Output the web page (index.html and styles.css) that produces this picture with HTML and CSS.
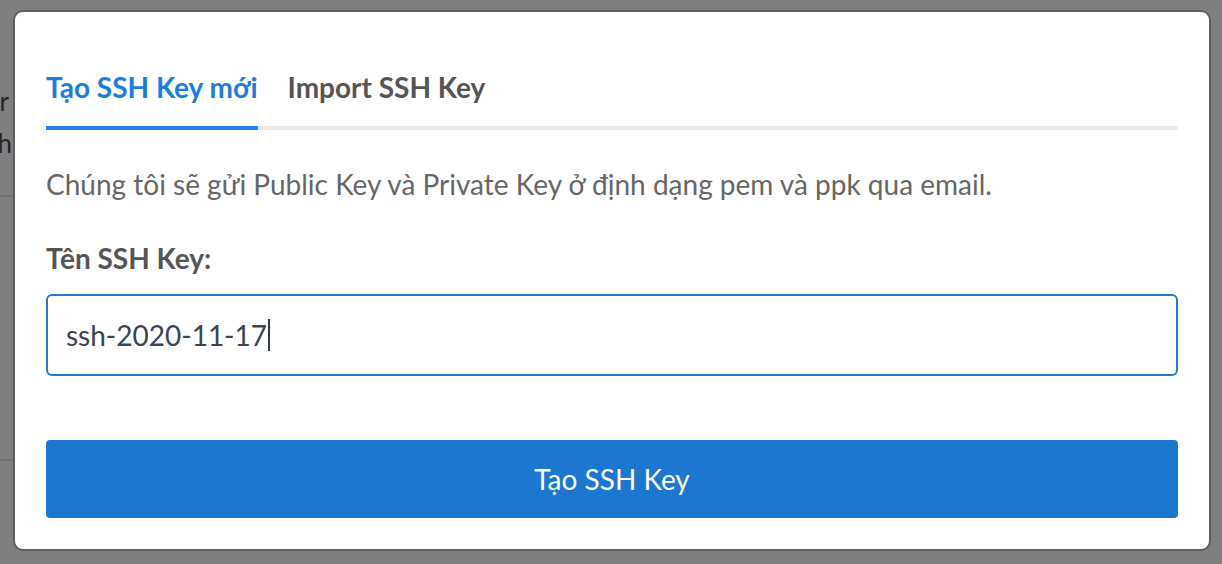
FILE: index.html
```html
<!DOCTYPE html>
<html lang="vi">
<head>
<meta charset="utf-8">
<title>SSH Key</title>
<link rel="stylesheet" href="styles.css">
</head>
<body>
<div class="page">
  <div class="bg-col">
    <span class="bg-text bg-r">Server</span>
    <span class="bg-text bg-h">Thanh</span>
    <div class="bg-line bg-line1"></div>
    <div class="bg-line bg-line2"></div>
  </div>
</div>
<div class="overlay">
  <div class="modal">
    <div class="tabs">
      <div class="tab active">Tạo SSH Key mới</div>
      <div class="tab">Import SSH Key</div>
    </div>
    <p class="desc">Chúng tôi sẽ gửi Public Key và Private Key ở định dạng pem và ppk qua email.</p>
    <label class="label" for="keyname">Tên SSH Key:</label>
    <div class="input"><span class="input-text">ssh-2020-11-17</span><span class="caret"></span></div>
    <button class="btn" type="button">Tạo SSH Key</button>
  </div>
</div>
</body>
</html>
```
FILE: styles.css
```css
* { box-sizing: border-box; }
html, body { margin: 0; padding: 0; }
body {
  width: 1222px;
  height: 564px;
  overflow: hidden;
  position: relative;
  background: #ffffff;
  font-family: Lato, "Noto Sans", sans-serif;
}
.page {
  height: 564px;
  display: flex;
}
.bg-col {
  width: 13px;
  overflow: hidden;
  display: flex;
  flex-direction: column;
  align-items: flex-end;
  padding-top: 86px;
}
.bg-text {
  white-space: nowrap;
  font-size: 26px;
  line-height: 30px;
  color: #4a4a4a;
  margin-right: 4px;
}
.bg-h { margin-top: 12px; margin-right: 1px; }
.bg-line {
  align-self: stretch;
  height: 2px;
  background: #e2e2e2;
  flex: none;
}
.bg-line1 { margin-top: 37px; }
.bg-line2 { margin-top: 262px; }

.overlay {
  position: absolute;
  inset: 0;
  background: rgba(0, 0, 0, 0.5);
  padding: 10px 0 0 13px;
}
.modal {
  width: 1198px;
  height: 541px;
  background: #ffffff;
  border: 2px solid #5e5e5e;
  border-radius: 10px;
  padding: 0 31px;
  display: flex;
  flex-direction: column;
}
.tabs {
  display: flex;
  gap: 30px;
  margin-top: 56px;
  border-bottom: 4px solid #ebebeb;
}
.tab {
  font-size: 28px;
  font-weight: 700;
  line-height: 38px;
  color: #555555;
  padding-bottom: 20px;
  margin-bottom: -4px;
  border-bottom: 4px solid transparent;
}
.tab.active {
  color: #1c7ddb;
  border-bottom-color: #1f80e6;
}
.desc {
  margin: 38px 0 0;
  font-size: 28px;
  line-height: 32px;
  color: #666666;
}
.label {
  margin-top: 42px;
  font-size: 28px;
  font-weight: 700;
  line-height: 32px;
  color: #555555;
}
.input {
  margin-top: 20px;
  height: 82px;
  border: 2px solid #2678cc;
  border-radius: 6px;
  padding: 0 18px;
  display: flex;
  align-items: center;
}
.input-text {
  font-size: 28px;
  color: #3c4350;
}
.caret {
  width: 2px;
  height: 32px;
  background: #333a44;
  margin-left: 1px;
}
.btn {
  margin-top: 64px;
  height: 78px;
  border: 0;
  border-radius: 4px;
  background: #1c77d0;
  color: #ffffff;
  font-family: Lato, "Noto Sans", sans-serif;
  font-size: 28px;
  padding: 0;
  width: 100%;
}
```
